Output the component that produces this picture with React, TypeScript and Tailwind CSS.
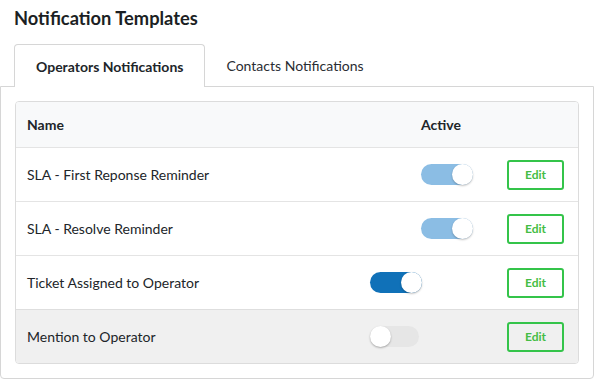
import React from 'react'

type Row = {
  name: string
  state: 'on-light' | 'on' | 'off'
  nameWidth: string
  muted?: boolean
}

const rows: Row[] = [
  { name: 'SLA - First Reponse Reminder', state: 'on-light', nameWidth: 'w-[405px]' },
  { name: 'SLA - Resolve Reminder', state: 'on-light', nameWidth: 'w-[405px]' },
  { name: 'Ticket Assigned to Operator', state: 'on', nameWidth: 'w-[354px]' },
  { name: 'Mention to Operator', state: 'off', nameWidth: 'w-[354px]', muted: true },
]

const Toggle = ({ state }: { state: Row['state'] }) => {
  if (state === 'off') {
    return (
      <div className="relative w-[49px] h-[21px] rounded-full bg-[#e6e6e6]">
        <span className="absolute left-0 top-0 w-[21px] h-[21px] rounded-full bg-white shadow-[0_1px_2px_rgba(0,0,0,0.3)]" />
      </div>
    )
  }
  return (
    <div
      className={
        state === 'on'
          ? 'relative w-[52px] h-[21px] rounded-full bg-[#1071b8]'
          : 'relative w-[52px] h-[21px] rounded-full bg-[#8bbde4]'
      }
    >
      <span className="absolute right-0 top-0 w-[21px] h-[21px] rounded-full bg-white shadow-[0_1px_2px_rgba(0,0,0,0.25)]" />
    </div>
  )
}

const App = () => {
  return (
    <div className="w-[606px] h-[390px] bg-white font-['Lato',sans-serif] text-[#212529]">
      <h1 className="h-[44px] pl-[14px] pt-[5px] text-[18.3px] font-bold text-[#1c1f24]">
        Notification Templates
      </h1>

      {/* tabs */}
      <div className="flex pl-[14px]">
        <div className="relative z-10 -mb-px h-[43px] px-[21px] flex items-center bg-white border border-b-0 border-[#d6d6d6] rounded-t-[4px] text-[14px] font-bold">
          Operators Notifications
        </div>
        <div className="h-[42px] px-[21px] flex items-center text-[14px] text-[#2a2d33]">
          Contacts Notifications
        </div>
      </div>

      <div className="w-[594px] h-[293px] border border-[#d6d6d6] rounded-b-[4px] pt-[14px] px-[14px]">
        <div className="border border-[#dcdcdc] rounded-[4px] overflow-hidden">
          <div className="h-[45px] flex items-center bg-[#f8f9fa] text-[14px] font-bold">
            <div className="w-[405px] pl-[11px]">Name</div>
            <div>Active</div>
          </div>
          {rows.map((row) => (
            <div
              key={row.name}
              className={
                row.muted
                  ? 'h-[54px] flex items-center border-t border-[#dedede] bg-[#f0f0f0] text-[14px]'
                  : 'h-[54px] flex items-center border-t border-[#e4e4e4] bg-white text-[14px]'
              }
            >
              <div className={`${row.nameWidth} pl-[11px]`}>{row.name}</div>
              <Toggle state={row.state} />
              <button className="ml-auto mr-[14px] w-[57px] h-[30px] border-2 border-[#34c44a] rounded-[3px] bg-transparent text-[12px] font-bold text-[#45bd45]">
                Edit
              </button>
            </div>
          ))}
        </div>
      </div>
    </div>
  )
}

export default App
